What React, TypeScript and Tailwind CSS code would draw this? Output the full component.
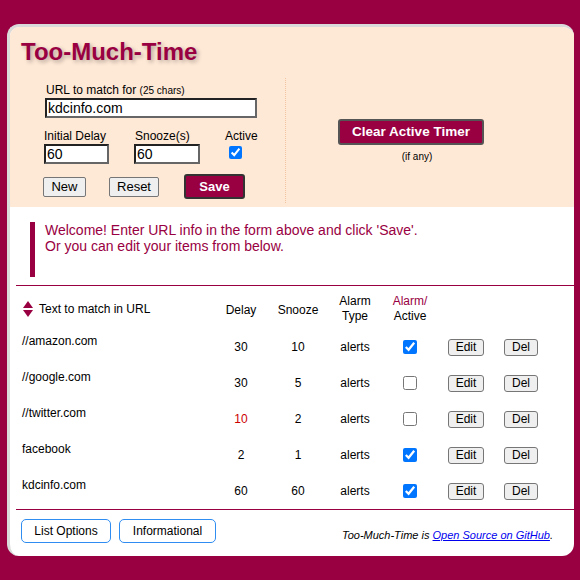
import React from 'react';

interface Item {
  url: string;
  delay: number;
  snooze: number;
  active: boolean;
  warn?: boolean;
}

const items: Item[] = [
  { url: '//amazon.com', delay: 30, snooze: 10, active: true },
  { url: '//google.com', delay: 30, snooze: 5, active: false },
  { url: '//twitter.com', delay: 10, snooze: 2, active: false, warn: true },
  { url: 'facebook', delay: 2, snooze: 1, active: true },
  { url: 'kdcinfo.com', delay: 60, snooze: 60, active: true },
];

const inputCls =
  'block h-[20px] border-2 border-t-[#222] border-l-[#222] border-r-[#666] border-b-[#666] bg-white px-[1px] text-[14px] leading-none text-black outline-none';

const grayBtn =
  'h-[20px] rounded-[2px] border border-[#767676] bg-[#efefef] text-[13px] leading-none text-black';

const SortArrows = () => (
  <svg width="10" height="16" viewBox="0 0 10 16">
    <polygon points="5,0 10,7 0,7" fill="#990042" />
    <polygon points="0,9 10,9 5,16" fill="#990042" />
  </svg>
);

export default function App() {
  return (
    <div className="min-h-screen bg-[#990042] pt-[24px] pl-[7px] pr-[6px] pb-[26px] font-['Liberation_Sans',Arial,sans-serif] text-black">
      <div className="overflow-hidden rounded-[12px] border-t-[3px] border-l-[3px] border-[#dadada] bg-white">
        {/* top form */}
        <div className="bg-[#fee8d6] pt-[11px] pb-[4px]">
          <h1 className="pl-[11px] text-[24px] font-bold leading-[28px] text-[#990042] [text-shadow:2px_2px_4px_rgba(0,0,0,0.3)]">
            Too-Much-Time
          </h1>
          <div className="mt-[12px] flex h-[125px]">
            <div className="w-[275px] pl-[34px] pt-[5px]">
              <div className="ml-[2px] text-[12px] leading-[14px]">
                URL to match for <span className="text-[10px]">(25 chars)</span>
              </div>
              <input className={`${inputCls} ml-[1px] w-[212px]`} defaultValue="kdcinfo.com" />
              <div className="mt-[11px] flex">
                <div className="w-[90px]">
                  <div className="text-[12px] leading-[14px]">Initial Delay</div>
                  <input className={`${inputCls} mt-[1px] w-[65px]`} defaultValue="60" />
                </div>
                <div className="w-[91px]">
                  <div className="ml-[1px] text-[12px] leading-[14px]">Snooze(s)</div>
                  <input className={`${inputCls} mt-[1px] w-[66px]`} defaultValue="60" />
                </div>
                <div className="flex flex-col">
                  <div className="text-[12px] leading-[14px]">Active</div>
                  <input type="checkbox" defaultChecked className="ml-[4px] mt-[3px] block h-[13px] w-[13px]" />
                </div>
              </div>
              <div className="-ml-[1px] mt-[10px] flex items-center">
                <button className={`${grayBtn} w-[43px]`}>New</button>
                <button className={`${grayBtn} ml-[23px] w-[50px]`}>Reset</button>
                <button className="ml-[25px] h-[25px] w-[61px] rounded-[3px] border-2 border-[#333] bg-[#990042] text-[13px] font-bold text-white">
                  Save
                </button>
              </div>
            </div>
            <div className="border-l border-dotted border-[#f2c4a2]" />
            <div className="flex w-[250px] flex-col items-center pt-[41px]">
              <button className="h-[26px] w-[146px] rounded-[3px] border-2 border-[#555] bg-[#990042] text-[13.5px] font-bold text-white">
                Clear Active Timer
              </button>
              <div className="ml-[12px] mt-[6px] text-[10px] leading-[12px]">(if any)</div>
            </div>
          </div>
        </div>

        {/* welcome */}
        <div className="ml-[20px] mt-[15px] h-[55px] border-l-[5px] border-[#990042] pl-[10px] text-[14px] leading-[16px] text-[#990042]">
          <div>Welcome! Enter URL info in the form above and click 'Save'.</div>
          <div>Or you can edit your items from below.</div>
        </div>
        <div className="ml-[6px] mt-[8px] h-px bg-[#990042]" />

        {/* table */}
        <div className="mt-[3px] flex h-[40px] items-center text-[12px] leading-[15px]">
          <div className="flex w-[207px] items-center gap-[6px] pl-[13px]">
            <SortArrows />
            <span>Text to match in URL</span>
          </div>
          <div className="w-[48px] pt-[3px] text-center">Delay</div>
          <div className="w-[66px] pt-[3px] text-center">Snooze</div>
          <div className="w-[48px] text-center">
            Alarm
            <br />
            Type
          </div>
          <div className="w-[62px] text-center">
            <span className="text-[#990042]">Alarm/</span>
            <br />
            Active
          </div>
        </div>
        {items.map((it) => (
          <div key={it.url} className="flex h-[36px] items-center text-[12px]">
            <div className="w-[207px] self-start pl-[12px] pt-[5px] leading-[14px]">{it.url}</div>
            <div className={`w-[48px] text-center ${it.warn ? 'text-[#cc0000]' : ''}`}>{it.delay}</div>
            <div className="w-[66px] text-center">{it.snooze}</div>
            <div className="w-[48px] text-center">alerts</div>
            <div className="flex w-[62px] justify-center">
              <input type="checkbox" defaultChecked={it.active} className="m-0 h-[14px] w-[14px]" />
            </div>
            <div className="flex w-[50px] justify-center">
              <button className="h-[17px] w-[36px] rounded-[3px] border border-[#767676] bg-[#efefef] text-[12px] leading-none">
                Edit
              </button>
            </div>
            <div className="flex w-[60px] justify-center">
              <button className="h-[17px] w-[34px] rounded-[3px] border border-[#767676] bg-[#efefef] text-[12px] leading-none">
                Del
              </button>
            </div>
          </div>
        ))}
        <div className="ml-[6px] h-px bg-[#990042]" />

        {/* footer */}
        <div className="flex items-center pl-[11px] pr-[21px] pt-[9px] pb-[12px]">
          <button className="h-[24px] w-[90px] rounded-[5px] border border-[#2f8cf0] bg-white text-[12px]">
            List Options
          </button>
          <button className="ml-[8px] h-[24px] w-[97px] rounded-[5px] border border-[#2f8cf0] bg-white text-[12px]">
            Informational
          </button>
          <div className="ml-auto mt-[8px] text-[11px] italic">
            Too-Much-Time is{' '}
            <a href="#" className="text-[#0000ee] underline">
              Open Source on GitHub
            </a>
            .
          </div>
        </div>
      </div>
    </div>
  );
}
